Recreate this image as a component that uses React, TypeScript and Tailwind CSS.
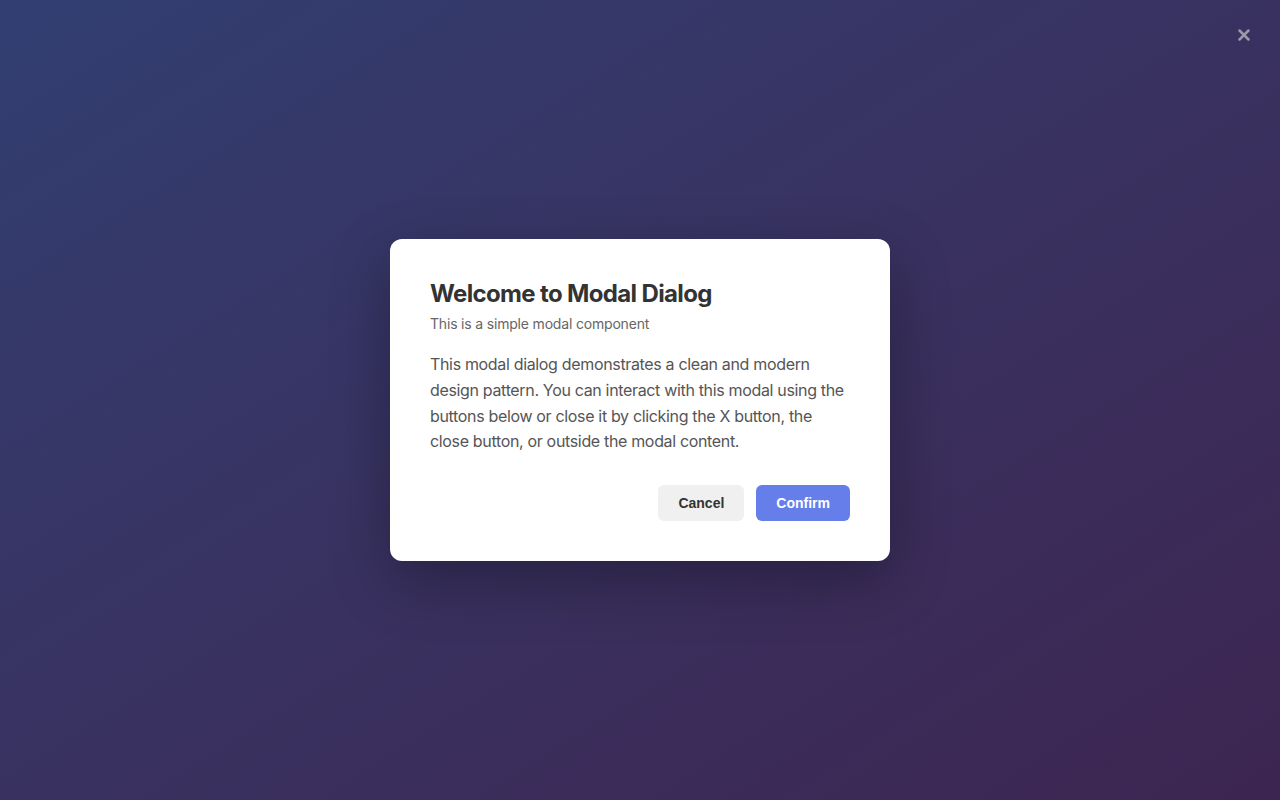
import { X } from 'lucide-react';

export default function App() {
  return (
    <div className="relative flex h-[800px] w-full items-center justify-center overflow-hidden bg-gradient-to-br from-[#313e71] to-[#3d2551] font-['Inter',sans-serif]">
      <button className="absolute right-[27px] top-[26px] flex h-[18px] w-[18px] items-center justify-center text-[#9a9aa9]">
        <X className="h-[18px] w-[18px]" strokeWidth={3.4} />
      </button>

      <div className="w-[500px] rounded-xl bg-white p-10 shadow-[0_20px_60px_rgba(0,0,0,0.3)]">
        <div className="mb-[18px]">
          <h2 className="mb-[5px] text-2xl leading-[30px] font-bold tracking-[-0.027em] text-[#333333]">Welcome to Modal Dialog</h2>
          <p className="text-sm leading-5 tracking-[-0.013em] text-[#666666]">This is a simple modal component</p>
        </div>
        <p className="mb-[30px] text-base leading-[1.6] tracking-[-0.021em] text-[#555555]">
          This modal dialog demonstrates a clean and modern design pattern. You can interact with this modal using the
          buttons below or close it by clicking the X button, the close button, or outside the modal content.
        </p>
        <div className="flex justify-end gap-3 font-['Liberation_Sans',Arial,sans-serif]">
          <button className="h-9 rounded-md bg-[#f0f0f0] px-5 text-sm font-bold text-[#333333]">Cancel</button>
          <button className="h-9 rounded-md bg-[#667eea] px-5 text-sm font-bold text-white">Confirm</button>
        </div>
      </div>
    </div>
  );
}
